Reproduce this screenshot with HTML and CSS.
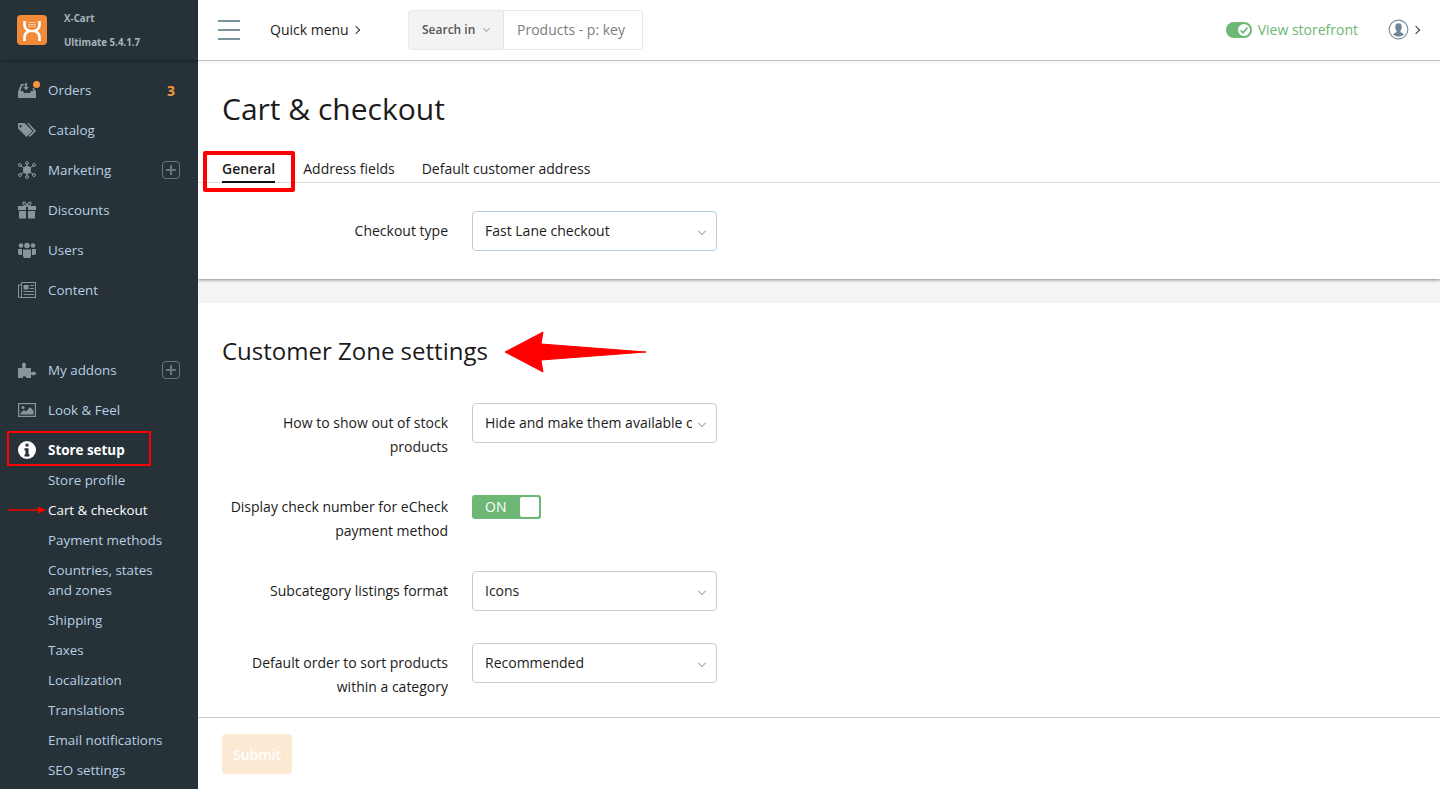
FILE: index.html
```html
<!DOCTYPE html>
<html lang="en">
<head>
  <meta charset="UTF-8" />
  <meta name="viewport" content="width=device-width, initial-scale=1.0"/>
  <title>Cart &amp; checkout</title>
  <link rel="stylesheet" href="styles.css">
</head>
<body>
  <aside class="sidebar">
    <div class="brand">
      <div class="logo">
        <svg width="30" height="30" viewBox="0 0 30 30">
          <path d="M7.500 6v4c0 3 2.500 5 4.500 6-2 1-4.500 3-4.500 6v4M22.500 6v4c0 3-2.500 5-4.500 6 2 1 4.500 3 4.500 6v4M11 16h8" fill="none" stroke="#fff" stroke-width="2.600"/>
          <path d="M11.500 7.500h7M11.500 9.500h7M11.500 11.500h7" stroke="#fff" stroke-width="1" stroke-dasharray="1 1"/>
        </svg>
      </div>
      <div class="brand-text">
        <span>X-Cart</span>
        <span>Ultimate 5.4.1.7</span>
      </div>
    </div>
    <nav class="menu">
      <a class="item">
        <svg class="ico" viewBox="0 0 18 18"><path d="M0 10h5l1 2h6l1-2h5v7H0z"/><path d="M.3 10 3 3h3.500v1.500H4.300L2.500 10zM15.500 10l-1.200-3h1.500l1.900 3z"/><path d="M7.200 2h1.800v4h2l-2.900 3.200L5.200 6h2z"/></svg>
        <span class="dot"></span>
        <span>Orders</span>
        <b class="count">3</b>
      </a>
      <a class="item">
        <svg class="ico" viewBox="0 0 18 18"><path d="M0 2h6.500l8 8-6 6L0 7.500zM2.500 4a1.200 1.200 0 1 0 0 2.400 1.200 1.200 0 0 0 0-2.400z" fill-rule="evenodd"/><path d="M9 2h1.500l7.500 8-6 6-1.300-1.300 5-4.700z"/></svg>
        <span>Catalog</span>
      </a>
      <a class="item">
        <svg class="ico" viewBox="0 0 18 18"><g stroke="#8a949b" stroke-width="1" fill="none"><path d="M9 9 2.500 4.500M9 9l6.500-4.500M9 9l-6.500 4.500M9 9l6.500 4.500M9 9V2M9 9v7"/><circle cx="2" cy="4" r="1.500"/><circle cx="16" cy="4" r="1.500"/><circle cx="2" cy="14" r="1.500"/><circle cx="16" cy="14" r="1.500"/><circle cx="9" cy="2" r="1.500"/><circle cx="9" cy="16" r="1.500"/></g><circle cx="9" cy="9" r="4"/></svg>
        <span>Marketing</span>
        <i class="plus"></i>
      </a>
      <a class="item">
        <svg class="ico" viewBox="0 0 18 18"><path d="M0 5h8v4H0zM10 5h8v4h-8zM1 10h7v7.500H1zM10 10h7v7.500h-7z"/><path d="M9 4.800C7 4.800 4.500 4 5 2S8 1.500 9 4.800c1-3.300 3.500-4.800 4-2.800s-2 2.800-4 2.800z" fill="none" stroke="#8a949b" stroke-width="1.200"/></svg>
        <span>Discounts</span>
      </a>
      <a class="item">
        <svg class="ico" viewBox="0 0 18 18"><circle cx="3" cy="4.500" r="2.300"/><circle cx="15" cy="4.500" r="2.300"/><circle cx="9" cy="4.500" r="2.800"/><path d="M0 8h4v6H1.300L0 12.500zM14 8h4v4.500L16.700 14H14zM5 8.500h8V15l-1 2H6l-1-2z"/></svg>
        <span>Users</span>
      </a>
      <a class="item">
        <svg class="ico" viewBox="0 0 18 18"><path d="M3.500 1.500H17.500v15h-16a1 1 0 0 1-1-1V4h3" fill="none" stroke="#8a949b" stroke-width="1.100"/><path d="M3.500 1.500v15" stroke="#8a949b" stroke-width=".9" fill="none"/><path d="M5.500 4h5v4.500h-5z"/><path d="M11.800 4.500H16M11.800 7.500H16M5.500 10.500H16M5.500 13.500H16" stroke="#8a949b" stroke-width="1.200"/></svg>
        <span>Content</span>
      </a>
      <div class="menu-gap"></div>
      <a class="item">
        <svg class="ico" viewBox="0 0 18 18"><path d="M0 7h4.500c-1-2-.5-5.500 1.500-5.500S8.500 5 7.500 7H13v4.500c2-1.500 5-1 5 1s-3 2.500-5 1V17H8c.8-2.500-4-2.500-3.200 0H0z"/></svg>
        <span>My addons</span>
        <i class="plus"></i>
      </a>
      <a class="item">
        <svg class="ico" viewBox="0 0 18 18"><rect x=".6" y="2.600" width="16.800" height="12.800" fill="none" stroke="#8a949b" stroke-width="1.200"/><path d="M2.500 13.500v-1.500l3.500-3 2 1.500 4-4.500 3.500 3.500v4z"/><circle cx="5" cy="6.500" r="1.500"/></svg>
        <span>Look &amp; Feel</span>
      </a>
      <a class="item active">
        <svg class="ico" viewBox="0 0 18 18"><circle cx="9" cy="9" r="9" fill="#fff"/><path d="M7.500 2.800h3v2.700h-3zM6.500 7.300h4v6h1v2.200h-5v-2.200h1v-3.700h-1z" fill="#263238"/></svg>
        <span>Store setup</span>
      </a>
      <div class="submenu">
        <a>Store profile</a>
        <a class="current">Cart &amp; checkout</a>
        <a>Payment methods</a>
        <a>Countries, states<br>and zones</a>
        <a>Shipping</a>
        <a>Taxes</a>
        <a>Localization</a>
        <a>Translations</a>
        <a>Email notifications</a>
        <a>SEO settings</a>
      </div>
    </nav>
  </aside>

  <div class="main">
    <header class="topbar">
      <div class="burger"><span></span><span></span><span></span></div>
      <a class="quick">Quick menu <i class="chev"></i></a>
      <div class="search">
        <div class="search-in">Search in <i class="caret"></i></div>
        <div class="search-box">Products - p: key</div>
      </div>
      <div class="top-right">
        <span class="switch"><svg width="11" height="11" viewBox="0 0 11 11"><path d="M2.500 5.700 4.700 8l4-4.800" fill="none" stroke="#6cb874" stroke-width="1.500"/></svg></span>
        <a class="storefront">View storefront</a>
        <svg class="avatar" width="21" height="21" viewBox="0 0 22 22">
          <circle cx="11" cy="11" r="9.800" fill="#fff" stroke="#7a8f9c" stroke-width="1.200"/>
          <path d="M7.500 8.500a3.500 4 0 0 1 7 0c0 2-1 3.500-1.500 4v1l4 2.500a8.500 8.500 0 0 1-12 0l4-2.500v-1c-.5-.5-1.500-2-1.500-4z" fill="#6f8796"/>
        </svg>
        <i class="chev"></i>
      </div>
    </header>

    <main class="content">
      <section class="card first">
        <h1>Cart &amp; checkout</h1>
        <div class="tabs">
          <a class="tab on">General</a>
          <a class="tab">Address fields</a>
          <a class="tab">Default customer address</a>
        </div>
        <div class="row">
          <label>Checkout type</label>
          <div class="select focus">Fast Lane checkout</div>
        </div>
      </section>
      <section class="card second">
        <h2>Customer Zone settings</h2>
        <div class="row tall">
          <label>How to show out of stock products</label>
          <div class="select"><span class="clip">Hide and make them available only via direct link</span></div>
        </div>
        <div class="row tall">
          <label>Display check number for eCheck payment method</label>
          <div class="toggle"><span>ON</span><i></i></div>
        </div>
        <div class="row">
          <label>Subcategory listings format</label>
          <div class="select">Icons</div>
        </div>
        <div class="row tall">
          <label>Default order to sort products within a category</label>
          <div class="select">Recommended</div>
        </div>
      </section>
    </main>

    <footer class="footer">
      <button type="button" disabled>Submit</button>
    </footer>
  </div>

  <!-- red marks drawn over the screenshot -->
  <div class="mark mark-tab"></div>
  <div class="mark mark-menu"></div>
  <svg class="arrow-small" width="40" height="10" viewBox="0 0 40 10"><path d="M0 5h32" stroke="#f00" stroke-width="1.500"/><path d="M30 1.500 38 5l-8 3.500z" fill="#f00"/></svg>
  <svg class="arrow-big" width="146" height="44" viewBox="0 0 146 44"><path d="M1 21 39 1l-2 12 105 8-105 8 2 12z" fill="#f00" stroke="#f00" stroke-linejoin="round"/></svg>
</body>
</html>
```

FILE: styles.css
```css
* { box-sizing: border-box; }
html, body { height: 100%; }
body {
  font-family: 'Open Sans', sans-serif;
  font-size: 14px;
  color: #1b1b1b;
  background: #fff;
  margin: 0;
  display: flex;
  height: 100vh;
  overflow: hidden;
}

/* sidebar */
.sidebar {
  width: 198px;
  flex: none;
  background: #263238;
  color: #b9cfe3;
  font-size: 13.4px;
  overflow: hidden;
}
.brand {
  height: 60px;
  display: flex;
  align-items: center;
  padding-left: 17px;
  background: #263238;
  box-shadow: 0 1px 4px rgba(0,0,0,0.35);
}
.logo {
  width: 30px;
  height: 30px;
  border-radius: 4px;
  background: #f28a37;
}
.logo svg { display: block; }
.brand-text {
  display: flex;
  flex-direction: column;
  gap: 11px;
  margin-left: 17px;
  font-size: 9.75px;
  font-weight: 700;
  line-height: 13px;
  color: #a9b5bd;
}
.menu { padding-top: 10px; }
.item {
  position: relative;
  display: flex;
  align-items: center;
  height: 40px;
  padding-left: 18px;
}
.ico {
  width: 18px;
  height: 18px;
  margin-right: 12px;
  flex: none;
  fill: #8a949b;
}
.dot {
  position: absolute;
  left: 33px;
  top: 11px;
  width: 7px;
  height: 7px;
  border-radius: 50%;
  background: #f7963a;
}
.count {
  position: absolute;
  right: 23px;
  color: #f29a38;
  font-size: 14px;
  font-weight: 700;
}
.plus {
  position: absolute;
  left: 162px;
  top: 11px;
  width: 18px;
  height: 18px;
  border: 1px solid #6b757b;
  border-radius: 4px;
}
.plus::before, .plus::after {
  content: "";
  position: absolute;
  background: #6b757b;
}
.plus::before { left: 3px; right: 3px; top: 7px; height: 2px; }
.plus::after { top: 3px; bottom: 3px; left: 7px; width: 2px; }
.menu-gap { height: 40px; }
.item.active {
  color: #fff;
  font-weight: 700;
  height: 40px;
}
.submenu { padding-left: 48px; margin-top: -5px; }
.submenu a {
  display: block;
  padding: 5px 0;
  line-height: 20px;
}
.submenu a.current { color: #fff; }

/* top bar */
.main {
  flex: 1;
  min-width: 0;
  display: flex;
  flex-direction: column;
}
.topbar {
  height: 61px;
  flex: none;
  display: flex;
  align-items: center;
  padding: 0 21px 1px 20px;
  border-bottom: 1px solid #c4c4c4;
  background: #fff;
  box-shadow: 0 2px 4px rgba(0,0,0,0.05);
  position: relative;
}
.burger {
  width: 22px;
  display: flex;
  flex-direction: column;
  gap: 7px;
}
.burger span { height: 2px; background: #7b929f; }
.quick {
  margin-left: 30px;
  width: 91px;
  display: flex;
  align-items: center;
  gap: 4px;
}
.chev {
  display: inline-block;
  width: 6px;
  height: 6px;
  flex: none;
  border-top: 1px solid #333;
  border-right: 1px solid #333;
  transform: rotate(45deg);
}
.search {
  margin-left: 47px;
  display: flex;
  height: 40px;
  width: 235px;
  border: 1px solid #e9e9e9;
  border-radius: 3px;
}
.search-in {
  width: 95px;
  background: #f3f3f3;
  border-right: 1px solid #e4e4e4;
  font-size: 12px;
  font-weight: 600;
  color: #555;
  display: flex;
  align-items: center;
  padding-left: 13px;
  gap: 9px;
}
.caret {
  display: inline-block;
  width: 5px;
  height: 5px;
  border-right: 1px solid #a8a8b0;
  border-bottom: 1px solid #a8a8b0;
  transform: rotate(45deg);
  margin-top: -2px;
}
.search-box {
  flex: 1;
  display: flex;
  align-items: center;
  padding-left: 13px;
  color: #7d7d7d;
}
.top-right {
  margin-left: auto;
  display: flex;
  align-items: center;
}
.switch {
  width: 26px;
  height: 16px;
  border-radius: 8px;
  background: #6cb874;
  position: relative;
}
.switch svg {
  position: absolute;
  right: 2px;
  top: 2px;
  width: 12px;
  height: 12px;
  background: #fff;
  border-radius: 50%;
}
.storefront { margin-left: 6px; color: #6cb874; }
.avatar { margin-left: 30px; margin-right: 4px; }

/* page */
.content {
  flex: 1;
  min-height: 0;
  overflow: hidden;
  background: #f4f4f4;
}
.card { background: #fff; }
.card.first {
  height: 218px;
  padding-top: 26px;
  box-shadow: 0 1px 3px rgba(0,0,0,0.45);
}
.card.second {
  margin-top: 24px;
  padding-top: 31px;
  height: 420px;
}
h1 {
  font-size: 30px;
  font-weight: 400;
  line-height: 44px;
  margin: 0 0 0 24px;
  color: #1b1b1b;
}
h2 {
  font-size: 24px;
  font-weight: 400;
  line-height: 34px;
  margin: 0 0 35px 24px;
}
.tabs {
  display: flex;
  gap: 27px;
  margin-top: 14px;
  height: 38px;
  padding-left: 24px;
  border-bottom: 1px solid #d8dcdf;
}
.tab {
  line-height: 20px;
  padding-top: 14px;
  height: 38px;
}
.tab.on {
  font-weight: 600;
  margin-right: 1px;
  border-bottom: 2px solid #111;
}
.row {
  display: flex;
  align-items: flex-start;
  margin-bottom: 32px;
}
.row label {
  width: 226px;
  margin: 0 24px 0 24px;
  padding-top: 8px;
  text-align: right;
  line-height: 24px;
}
.first .row { margin-top: 28px; margin-bottom: 0; }
.select {
  width: 245px;
  height: 40px;
  border: 1px solid #c9cbcf;
  border-radius: 4px;
  padding: 0 24px 0 12px;
  line-height: 38px;
  position: relative;
  background: #fff;
}
.select::after {
  content: "";
  position: absolute;
  right: 11px;
  top: 16px;
  width: 5px;
  height: 5px;
  border-right: 1px solid #a8a8b0;
  border-bottom: 1px solid #a8a8b0;
  transform: rotate(45deg);
}
.select.focus { border-color: #b4cde0; }
.clip {
  display: block;
  overflow: hidden;
  white-space: nowrap;
}
.row.tall { min-height: 56px; margin-bottom: 28px; }
.toggle {
  width: 69px;
  height: 24px;
  margin-top: 8px;
  border-radius: 3px;
  background: #6cb874;
  display: flex;
  justify-content: space-between;
  padding: 2px;
  color: #fff;
}
.toggle span { padding-left: 11px; line-height: 20px; }
.toggle i { width: 19px; background: #fff; border-radius: 2px; }

/* footer */
.footer {
  height: 72px;
  flex: none;
  border-top: 1px solid #c9c9c9;
  background: #fff;
  padding: 16px 24px;
}
.footer button {
  width: 70px;
  height: 40px;
  border: none;
  border-radius: 4px;
  background: #fbe9d3;
  color: #fff;
  font: 600 14px 'Open Sans', sans-serif;
}

/* red annotations */
.mark {
  position: absolute;
  border: 3px solid #f00;
}
.mark-tab { left: 203px; top: 151px; width: 92px; height: 41px; border-width: 4px; border-radius: 2px; }
.mark-menu { left: 7px; top: 431px; width: 144px; height: 35px; border-width: 2px; }
.arrow-small { position: absolute; left: 8px; top: 505px; }
.arrow-big { position: absolute; left: 504px; top: 331px; }
```
